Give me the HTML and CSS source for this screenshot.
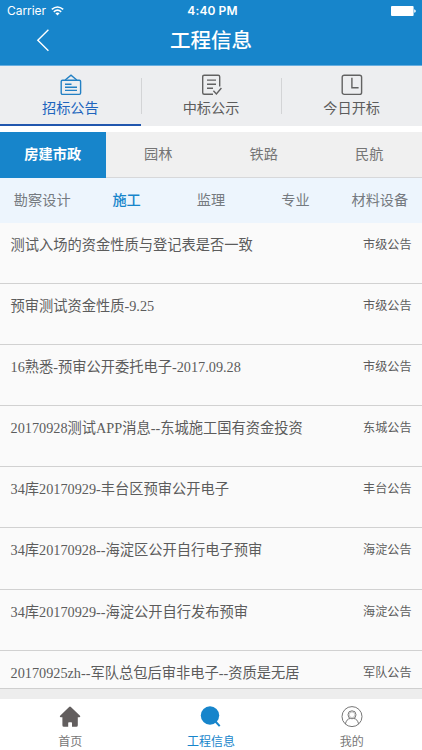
FILE: index.html
```html
<!DOCTYPE html>
<html lang="zh-CN">
<head>
<meta charset="utf-8">
<title>工程信息</title>
<link rel="stylesheet" href="styles.css">
</head>
<body>
<div class="app">
  <header class="header">
    <div class="status">
      <div class="carrier">Carrier
        <svg class="wifi" width="13" height="10" viewBox="0 0 13 10" fill="none" stroke="#fff" stroke-width="1.6"><path d="M.8 3.4Q6.5-1.4 12.2 3.4M2.8 5.8Q6.5 2.6 10.2 5.8"/><path d="M4.4 7.2Q6.5 5.6 8.6 7.2L6.5 9.5Z" fill="#fff" stroke="none"/></svg>
      </div>
      <div class="time">4:40 PM</div>
      <svg class="battery" width="25" height="10" viewBox="0 0 25 10" fill="#fff"><rect width="22.6" height="10" rx="1"/><path d="M23.2 3.2Q24.8 3.6 24.8 5T23.2 6.8Z"/></svg>
    </div>
    <div class="nav">
      <svg class="back" width="14" height="24" viewBox="0 0 14 24" fill="none" stroke="#fff" stroke-width="1.4"><path d="M12.4 1.8 1.8 12.3 12.4 22.8"/></svg>
      <h1>工程信息</h1>
      <span></span>
    </div>
  </header>
  <nav class="types">
    <a class="type active">
      <svg width="22" height="22" viewBox="0 0 22 22" fill="none" stroke="#2380c4" stroke-width="1.4"><rect x="1.2" y="6.2" width="19.4" height="14.2" rx="1.3"/><path d="M5.2 6 11 1.1 16.8 6M5 10.2h6.5M5 13.2h12M5 16.4h12"/></svg>
      <span>招标公告</span>
    </a>
    <a class="type">
      <svg width="22" height="22" viewBox="0 0 22 22" fill="none" stroke="#626262" stroke-width="1.4"><path d="M12 20.3H3.2Q1.7 20.3 1.7 18.8V2.7Q1.7 1.2 3.2 1.2H17.2Q18.7 1.2 18.7 2.7V12.5M6 6.1h9M6 10.2h9M6 14.3h6M12.4 16.8l3 3.2 5-6"/></svg>
      <span>中标公示</span>
    </a>
    <a class="type">
      <svg width="22" height="22" viewBox="0 0 22 22" fill="none" stroke="#626262" stroke-width="1.4"><rect x="1.2" y="1.2" width="19.4" height="19.2" rx="2"/><path d="M10.9 3.7v10h6.7"/></svg>
      <span>今日开标</span>
    </a>
  </nav>
  <nav class="fields">
    <a class="active">房建市政</a><a>园林</a><a>铁路</a><a>民航</a>
  </nav>
  <nav class="subs">
    <a>勘察设计</a><a class="active">施工</a><a>监理</a><a>专业</a><a>材料设备</a>
  </nav>
  <main class="list">
    <div class="row"><span>测试入场的资金性质与登记表是否一致</span><em>市级公告</em></div>
    <div class="row"><span>预审测试资金性质-9.25</span><em>市级公告</em></div>
    <div class="row"><span>16熟悉-预审公开委托电子-2017.09.28</span><em>市级公告</em></div>
    <div class="row"><span>20170928测试APP消息--东城施工国有资金投资</span><em>东城公告</em></div>
    <div class="row"><span>34库20170929-丰台区预审公开电子</span><em>丰台公告</em></div>
    <div class="row"><span>34库20170928--海淀区公开自行电子预审</span><em>海淀公告</em></div>
    <div class="row"><span>34库20170929--海淀公开自行发布预审</span><em>海淀公告</em></div>
    <div class="row"><span>20170925zh--军队总包后审非电子--资质是无居</span><em>军队公告</em></div>
  </main>
  <footer class="tabbar">
    <a>
      <svg width="22" height="22" viewBox="0 0 22 22" fill="#625e5e"><path d="M10.1.9Q11 .2 11.9.9L21 9.8Q21.9 11.2 20.4 11.3H18.8V19.2Q18.8 20.8 17.3 20.8H13V16.9Q13 16.2 12.3 16.2H9.9Q9.2 16.2 9.2 16.9V20.8H4.9Q3.4 20.8 3.4 19.2V11.3H1.7Q.2 11.2 1.1 9.8Z"/></svg>
      <span>首页</span>
    </a>
    <a class="active">
      <svg width="22" height="22" viewBox="0 0 22 22"><circle cx="10" cy="9.5" r="9.2" fill="#1785cb"/><path d="m15.5 15.5 4.2 4.6" stroke="#1785cb" stroke-width="2"/></svg>
      <span>工程信息</span>
    </a>
    <a>
      <svg width="22" height="22" viewBox="0 0 22 22" fill="none" stroke="#777" stroke-width="1"><circle cx="11" cy="10.6" r="10"/><circle cx="11" cy="8.8" r="4"/><circle cx="11" cy="8.8" r="2.8" stroke-width=".4"/><path d="M4.4 18Q5.5 13 9 12.5M17.6 18Q16.5 13 13 12.5"/></svg>
      <span>我的</span>
    </a>
  </footer>
</div>
</body>
</html>
```
FILE: styles.css
```css
* { box-sizing: border-box; }
body { margin: 0; font-family: "Noto Sans CJK SC", sans-serif; color: #5c5c5c; }
.app { width: 422px; height: 750px; display: flex; flex-direction: column; overflow: hidden; background: #ededed; }
svg { display: block; flex: none; }
.header { height: 66px; flex: none; background: #1785cb; border-bottom: 1px solid #67aee0; color: #fff; }
.status { height: 21px; display: grid; grid-template-columns: 1fr auto 1fr; align-items: center; padding: 1px 6px 0 7px; font: 12px/20px Inter, sans-serif; }
.carrier { display: flex; align-items: center; gap: 5px; letter-spacing: -.05px; }
.wifi { margin-top: -1px; }
.time { font-weight: 600; letter-spacing: .1px; margin-left: 2px; }
.battery { justify-self: end; }
.nav { height: 38px; display: grid; grid-template-columns: 1fr auto 1fr; align-items: center; }
.back { margin-left: 36px; }
.nav h1 { margin: 0 0 2px; font-size: 20.5px; line-height: 36px; font-weight: 500; }
.types { height: 60px; flex: none; display: flex; background: #edeef0; }
.type { flex: 1; display: flex; flex-direction: column; align-items: center; padding: 8px 0 0 1px; position: relative; font-size: 14.2px; line-height: 22px; }
.type span { margin: 0 1px 0 0; }
.type + .type::before { content: ""; position: absolute; left: 0; top: 12px; width: 1px; height: 36px; background: #d3d4d6; }
.type.active { color: #2065bd; border-bottom: 2px solid #2056ae; }
.fields { height: 52px; flex: none; display: flex; border-top: 6px solid #fff; background: #f0f0f0; font-size: 14.2px; line-height: 43px; text-align: center; color: #757575; }
.fields a { flex: 1; border-bottom: 1px solid #d7d8da; }
.fields .active { background: #1785cb; color: #fff; font-weight: 700; border-color: #1785cb; }
.subs { height: 45px; flex: none; display: flex; background: #edf5fd; font-size: 14.2px; line-height: 43px; text-align: center; color: #757a80; }
.subs a { flex: 1; white-space: nowrap; }
.subs .active { color: #1785cb; font-weight: 500; }
.list { height: 466px; flex: none; overflow: hidden; background: #fafafa; border-bottom: 1px solid #cfcfcf; }
.row { height: 61.1px; display: flex; justify-content: space-between; padding: 10px 10.5px 0; border-bottom: 1px solid #d1d1d1; }
.row span { font: 14.25px/24px "Liberation Serif", "Noto Sans CJK SC", serif; white-space: nowrap; }
.row em { font-style: normal; font-size: 12.1px; line-height: 21px; }
.tabbar { margin-top: auto; height: 51px; flex: none; display: flex; background: #fff; font-size: 12px; line-height: 18px; color: #777; }
.tabbar a { flex: 1; display: flex; flex-direction: column; align-items: center; padding-top: 7px; }
.tabbar span { margin-top: 4px; }
.tabbar .active { color: #1785cb; }
```
